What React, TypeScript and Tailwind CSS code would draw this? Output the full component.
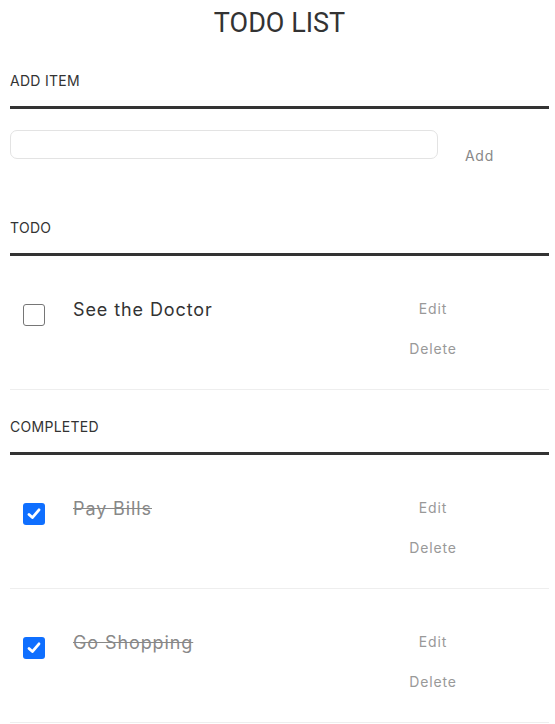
import React from "react";

type Item = { id: number; text: string; done: boolean };

const todo: Item[] = [{ id: 1, text: "See the Doctor", done: false }];
const completed: Item[] = [
  { id: 2, text: "Pay Bills", done: true },
  { id: 3, text: "Go Shopping", done: true },
];

function Check({ checked }: { checked: boolean }) {
  if (checked) {
    return (
      <span className="flex h-[22px] w-[22px] shrink-0 items-center justify-center rounded-[3px] bg-[#0f6fff]">
        <svg width="16" height="16" viewBox="0 0 16 16" fill="none">
          <path d="M3 8.4 L6.4 11.6 L13 3.8" stroke="#fff" strokeWidth="2.8" strokeLinecap="round" strokeLinejoin="round" />
        </svg>
      </span>
    );
  }
  return <span className="block h-[22px] w-[22px] shrink-0 rounded-[3px] border-[1.5px] border-[#767676] bg-white" />;
}

function Header({ title, pt }: { title: string; pt: string }) {
  return (
    <div className={`${pt} pb-[15px] border-b-[3px] border-[#333]`}>
      <h3 className="text-[14px] leading-[20px] tracking-[0.02em] text-[#333] uppercase">{title}</h3>
    </div>
  );
}

function Row({ item }: { item: Item }) {
  return (
    <li className="flex items-start border-b border-[#eee] pt-[33px] pb-[20px]">
      <div className="mt-[15px] ml-[13px]">
        <Check checked={item.done} />
      </div>
      <div
        className={`ml-[28px] mt-[9px] flex-1 text-[18px] leading-[24px] tracking-[0.05em] ${
          item.done ? "text-[#888] line-through" : "text-[#333]"
        }`}
      >
        {item.text}
      </div>
      <div className="mr-[81px] flex w-[70px] flex-col items-center text-[14px] leading-[20px] tracking-[0.06em] text-[#999]">
        <button className="py-[10px]">Edit</button>
        <button className="py-[10px]">Delete</button>
      </div>
    </li>
  );
}

export default function App() {
  return (
    <div className="min-h-[724px] bg-white pl-[10px] pr-[6px] text-[#333]" style={{ fontFamily: "Inter, 'Noto Sans', sans-serif" }}>
      <h1
        className="flex h-[44px] items-center justify-center pt-[2px] text-[27px] font-normal text-[#333]"
        style={{ fontFamily: "Roboto, 'Liberation Sans', sans-serif" }}
      >
        TODO LIST
      </h1>

      <Header title="Add item" pt="pt-[27px]" />
      <div className="mt-[21px] flex items-start">
        <input
          type="text"
          className="h-[29px] w-[428px] rounded-[7px] border border-[#e3e3e3] bg-white px-[10px] outline-none"
        />
        <button className="ml-[27px] mt-[16px] text-[14px] leading-[20px] tracking-[0.05em] text-[#888]">Add</button>
      </div>

      <Header title="Todo" pt="pt-[52px]" />
      <ul>
        {todo.map((i) => (
          <Row key={i.id} item={i} />
        ))}
      </ul>

      <Header title="Completed" pt="pt-[27px]" />
      <ul>
        {completed.map((i) => (
          <Row key={i.id} item={i} />
        ))}
      </ul>
    </div>
  );
}
